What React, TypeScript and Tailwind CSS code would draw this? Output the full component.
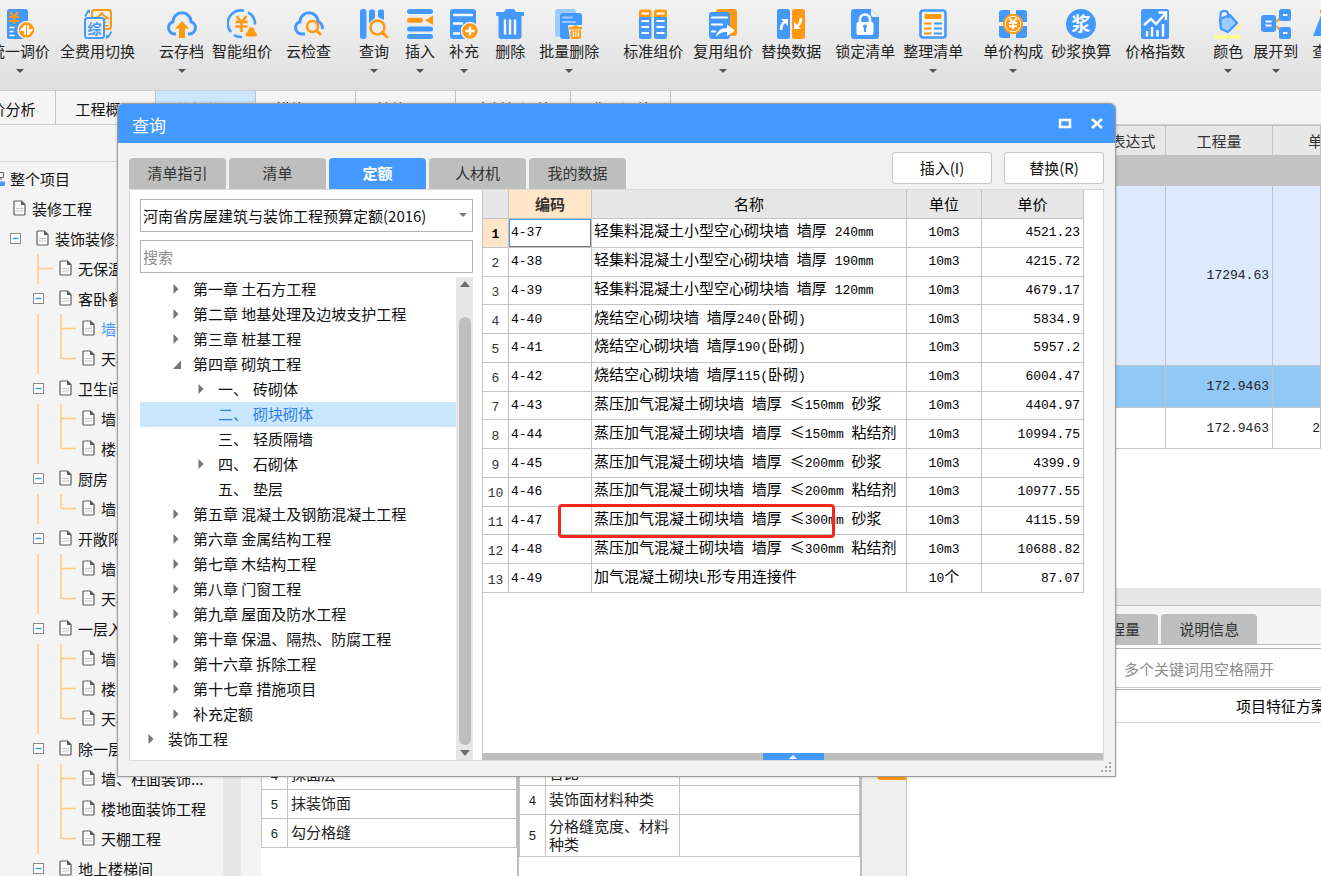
import React from "react";

const B = "#4499ff";
const O = "#ff9912";
const CJK = '"Noto Sans CJK SC", sans-serif';

/* ---------- toolbar icons, all on a 30 x 30 grid ---------- */

function Glyph({ x, y, size, fill, children }: { x: number; y: number; size: number; fill: string; children: string }) {
  return (
    <text x={x} y={y} fontSize={size} fill={fill} textAnchor="middle" fontWeight="bold" fontFamily={CJK}>
      {children}
    </text>
  );
}

const icons: Record<string, React.ReactNode> = {
  unify: (
    <>
      <rect x="2" y="0" width="21" height="30" rx="2.500" fill={B} />
      <path d="M5 3l4 5 4-5M4 8h10M4 12h10M9 8v7" stroke={O} strokeWidth="2.200" fill="none" />
      <path d="M4.500 18.500h5M4.500 22.500h4M4.500 26.500h5" stroke="#fff" strokeWidth="1.600" />
      <circle cx="21.500" cy="21" r="8.500" fill={O} stroke="#f0f0f0" strokeWidth="1.500" />
      <path d="M20 16v10M23 16v10M20 16.500l-3.500 4.500H20M23 25.500l3.500-4.500H23" stroke="#fff" strokeWidth="1.800" fill="#fff" />
    </>
  ),
  swap: (
    <>
      <rect x="9" y="1" width="19" height="19" rx="2.500" fill="none" stroke={O} strokeWidth="2" />
      <Glyph x={19} y={16} size={15} fill={O}>全</Glyph>
      <rect x="2" y="9" width="19" height="20" rx="2.500" fill="#f0f0f0" stroke={B} strokeWidth="2" />
      <Glyph x={11.5} y={24.5} size={14} fill={B}>综</Glyph>
      <path d="M2 7.500l3.500-6M28.500 22.500l-3.500 6" fill="none" stroke={B} strokeWidth="1.800" />
      <path d="M7 0v4.500L3.500 2.500zM23 30v-4.500l3.500 2z" fill={B} />
    </>
  ),
  cloudUp: (
    <>
      <path d="M9 25H7.500A6.300 6.300 0 0 1 6 12.700 9 9 0 0 1 24 12.700 6.300 6.300 0 0 1 22.500 25H21" fill="none" stroke={B} strokeWidth="3" />
      <path d="M15 12l7 7.500h-4V29h-6v-9.500H8z" fill={O} />
    </>
  ),
  smart: (
    <>
      <path d="M17 1.800A13 13 0 0 0 4 23M7 26a13 13 0 0 0 8 2M21 3.500a13 13 0 0 1 7 12" fill="none" stroke={B} strokeWidth="2.600" />
      <path d="M9.500 7l5 6 5-6M8.500 13h12M8.500 17.500h12M14.500 13v10" fill="none" stroke={O} strokeWidth="2.600" />
      <path d="M24.500 18c3 0 2.500 4 5 6.500 1 1.800 0 3-1.500 3h-7.500c-1.500 0-2.500-1.200-1.500-3 3-2.500 2.500-6.500 5.500-6.500z" fill={O} />
    </>
  ),
  cloudFind: (
    <>
      <path d="M11 25H7.500A6.300 6.300 0 0 1 6 12.700 9 9 0 0 1 24 12.700 6.500 6.500 0 0 1 28.300 20" fill="none" stroke={B} strokeWidth="3" />
      <circle cx="18.500" cy="17.500" r="5.500" fill="none" stroke={O} strokeWidth="2.600" />
      <path d="M22.500 21.500l4.500 4.500" stroke={O} strokeWidth="3" />
    </>
  ),
  query: (
    <>
      <rect x="1" y="0" width="6.500" height="30" rx="2.500" fill={B} />
      <path d="M10 2.500a2 2 0 0 1 2-2h2a2 2 0 0 1 2 2V9l-6 5zM19 2.500a2 2 0 0 1 2-2h2a2 2 0 0 1 2 2V11l-6-3z" fill={B} />
      <circle cx="18.500" cy="18.500" r="7" fill="none" stroke={O} strokeWidth="2.500" />
      <path d="M23.500 23.500l4.500 4.500" stroke={O} strokeWidth="3" strokeLinecap="round" />
    </>
  ),
  insert: (
    <>
      <path d="M4.500 2.500h21M4.500 20h21M4.500 27.500h21" stroke={B} strokeWidth="5" strokeLinecap="round" />
      <path d="M4.500 11.200h11" stroke={O} strokeWidth="5" strokeLinecap="round" />
      <path d="M28 6.500v9.500l-8-4.800z" fill={O} />
    </>
  ),
  supply: (
    <>
      <rect x="1" y="0" width="26" height="30" rx="3" fill={B} />
      <path d="M5 6h18M5 14.500h8M5 24.500h5" stroke="#fff" strokeWidth="2.400" strokeLinecap="round" />
      <circle cx="21" cy="22" r="8.500" fill={O} stroke="#f0f0f0" strokeWidth="1.600" />
      <path d="M21 17.500v9M16.500 22h9" stroke="#fff" strokeWidth="2.400" />
    </>
  ),
  trash: (
    <>
      <path d="M2 3h7l2-3h8l2 3h7a1 1 0 0 1 1 1v2a1 1 0 0 1-1 1h-1.500v20a3 3 0 0 1-3 3H6.500a3 3 0 0 1-3-3V7H2a1 1 0 0 1-1-1V4a1 1 0 0 1 1-1z" fill={B} />
      <path d="M10 10.500v15M15 10.500v15M20 10.500v15" stroke="#fff" strokeWidth="2.400" />
    </>
  ),
  batchTrash: (
    <>
      <rect x="1" y="0" width="21" height="28" rx="3" fill="#9cccff" />
      <rect x="6" y="4" width="22" height="26" rx="3" fill={B} />
      <path d="M9 8.500h9M9 13h12" stroke="#9cccff" strokeWidth="2" strokeLinecap="round" />
      <path d="M14 16h14v14H16z" fill="#f0f0f0" />
      <path d="M15 18h4l1-1.800h3l1 1.800h4v2.500H15zM16.500 21.500h10.500V28a2 2 0 0 1-2 2h-6.500a2 2 0 0 1-2-2z" fill={O} />
      <path d="M19.300 22.500v5.500M21.800 22.500v5.500M24.300 22.500v5.500" stroke="#fff" strokeWidth="1.200" />
    </>
  ),
  standard: (
    <>
      <path d="M1 3a2.500 2.500 0 0 1 2.500-2.500h8A2.500 2.500 0 0 1 13.500 3v5H1zM16 3a2.500 2.500 0 0 1 2.500-2.500h8A2.500 2.500 0 0 1 29 3v5H16z" fill={O} />
      <path d="M1 8h12.500v19.500A2.500 2.500 0 0 1 11 30H3.500A2.500 2.500 0 0 1 1 27.500zM16 8h13v19.500a2.500 2.500 0 0 1-2.500 2.500h-8a2.500 2.500 0 0 1-2.500-2.500z" fill={B} />
      <path d="M3.500 4.500H11M18.500 4.500h8M3.500 12H11M18.500 12h8M3.500 18H11M18.500 18h8M3.500 24H11M18.500 24h8" stroke="#fff" strokeWidth="2" />
    </>
  ),
  reuse: (
    <>
      <rect x="8" y="0" width="21" height="27" rx="3" fill={O} />
      <rect x="1" y="3" width="21" height="27" rx="3" fill={B} />
      <path d="M4 8.500h15M4 15.500h10M4 22.500h3" stroke="#fff" strokeWidth="2.200" strokeLinecap="round" />
      <path d="M8 28c1-6 5-9 11-9v-3.500l8 6-8 5.500v-4c-4-.5-8 1-11 5z" fill="#fff" />
    </>
  ),
  replace: (
    <>
      <rect x="1" y="0" width="13" height="30" rx="2.500" fill={B} />
      <rect x="16" y="0" width="13" height="30" rx="2.500" fill={O} />
      <path d="M5 21c0-4 1-6 3.500-8M25 9c0 4-1 6-3.500 8" fill="none" stroke="#fff" strokeWidth="2.600" />
      <path d="M5 10h7v7zM18 13v7h7z" fill="#fff" />
    </>
  ),
  lock: (
    <>
      <path d="M1 3a3 3 0 0 1 3-3h17l8 8v19a3 3 0 0 1-3 3H4a3 3 0 0 1-3-3z" fill={B} />
      <path d="M21 0l8 8h-6a2 2 0 0 1-2-2z" fill="#e9f4ff" />
      <rect x="6.500" y="13" width="17" height="13" rx="2" fill="#fff" />
      <path d="M10 14v-3.500a5 5 0 0 1 10 0V14" fill="none" stroke="#fff" strokeWidth="2.600" />
      <circle cx="15" cy="17.500" r="2" fill={B} />
      <path d="M15 18v5" stroke={B} strokeWidth="2" />
    </>
  ),
  tidy: (
    <>
      <rect x="2.500" y="1.500" width="25" height="27" rx="2.500" fill="#f4f4f4" stroke={B} strokeWidth="2.600" />
      <rect x="6.500" y="5" width="17" height="5" rx="1.500" fill={O} />
      <path d="M6 14.500h7.500M6 19.500h7.500M6 24.500h7.500" stroke={O} strokeWidth="2.200" />
      <path d="M16 14.500h8M16 19.500h8M16 24.500h8" stroke={B} strokeWidth="2.200" />
    </>
  ),
  compose: (
    <>
      <path d="M4 1h8v8l-4 4H1V4a3 3 0 0 1 3-3zM26 1h-8v8l4 4h7V4a3 3 0 0 0-3-3zM4 29h8v-8l-4-4H1v9a3 3 0 0 0 3 3zM26 29h-8v-8l4-4h7v9a3 3 0 0 1-3 3z" fill={B} />
      <circle cx="15" cy="15" r="9.200" fill="#fff" stroke={O} strokeWidth="2" />
      <circle cx="15" cy="15" r="7.300" fill={O} />
      <path d="M11.500 9.500l3.500 4 3.500-4M11 14h8M11 17.300h8M15 14v6.500" fill="none" stroke="#fff" strokeWidth="2" />
    </>
  ),
  mortar: (
    <>
      <circle cx="15" cy="15" r="15" fill={B} />
      <Glyph x={15} y={22} size={19} fill="#fff">浆</Glyph>
    </>
  ),
  index: (
    <>
      <rect x="1" y="0" width="28" height="30" rx="2.500" fill={B} />
      <path d="M4 16l7-6 5 5 9-10M18.500 3.500h7.500v7.500" fill="none" stroke="#fff" strokeWidth="2.400" />
      <path d="M7 22v5.500M12 18v9.500M17.500 21v6.500M23 15v12.500" stroke="#fff" strokeWidth="2.400" />
    </>
  ),
  color: (
    <>
      <path d="M7 10l10-4 7 8-9 9-7-3z" fill="#9cccff" stroke={B} strokeWidth="2.400" strokeLinejoin="round" />
      <path d="M7.500 12V4.500C8.500 1 14 1 15 4.500L16 9" fill="none" stroke={B} strokeWidth="2.200" />
      <path d="M26 14c1.500 3 2 4 .8 6h-2.600C23 18.500 24.500 16 26 14z" fill="#fff36b" />
      <rect x="1" y="26.500" width="27" height="3" fill="#ffff80" />
    </>
  ),
  expand: (
    <>
      <path d="M15 13l5-5M15 17l5 5" stroke={O} strokeWidth="2" />
      <rect x="0" y="6" width="15" height="17" rx="3" fill={B} />
      <rect x="18" y="0" width="12" height="12" rx="2.500" fill={B} />
      <rect x="18" y="18" width="12" height="12" rx="2.500" fill={B} />
      <path d="M4.500 12.500h6M4.500 16.500h6M22 6h4.500M22 24h4.500" stroke="#fff" strokeWidth="2" />
    </>
  ),
  find: (
    <>
      <path d="M10 4h10l6 23H1z" fill={B} />
      <path d="M8 2.500h12" stroke={O} strokeWidth="3" />
    </>
  ),
};

const tools: { icon: string; label: string; gap: string; menu?: boolean }[] = [
  { icon: "unify", label: "统一调价", gap: "", menu: true },
  { icon: "swap", label: "全费用切换", gap: "ml-2.5" },
  { icon: "cloudUp", label: "云存档", gap: "ml-6", menu: true },
  { icon: "smart", label: "智能组价", gap: "ml-2" },
  { icon: "cloudFind", label: "云检查", gap: "ml-3.5" },
  { icon: "query", label: "查询", gap: "ml-7", menu: true },
  { icon: "insert", label: "插入", gap: "ml-4", menu: true },
  { icon: "supply", label: "补充", gap: "ml-3.5", menu: true },
  { icon: "trash", label: "删除", gap: "ml-4" },
  { icon: "batchTrash", label: "批量删除", gap: "ml-3.5", menu: true },
  { icon: "standard", label: "标准组价", gap: "ml-6" },
  { icon: "reuse", label: "复用组价", gap: "ml-2.5", menu: true },
  { icon: "replace", label: "替换数据", gap: "ml-2" },
  { icon: "lock", label: "锁定清单", gap: "ml-3.5" },
  { icon: "tidy", label: "整理清单", gap: "ml-2", menu: true },
  { icon: "compose", label: "单价构成", gap: "ml-5", menu: true },
  { icon: "mortar", label: "砂浆换算", gap: "ml-2" },
  { icon: "index", label: "价格指数", gap: "ml-3.5" },
  { icon: "color", label: "颜色", gap: "ml-7", menu: true },
  { icon: "expand", label: "展开到", gap: "ml-2.5", menu: true },
  { icon: "find", label: "查找", gap: "ml-3.5" },
];

function Toolbar() {
  return (
    <header className="flex h-[91px] shrink-0 overflow-hidden border-b border-[#cdcdcd] bg-linear-to-b from-[#f3f3f3] to-[#dedede] pt-[9px]">
      <div className="-ml-2.5 flex items-start">
        {tools.map((t) => (
          <button key={t.label} type="button" className={`flex shrink-0 flex-col items-center whitespace-nowrap text-[#222] ${t.gap}`}>
            <svg viewBox="0 0 30 30" className="size-[30px]" aria-hidden="true">{icons[t.icon]}</svg>
            <span className="mt-0.5 h-5 leading-5">{t.label}</span>
            {t.menu && (
              <svg viewBox="0 0 8 4" className="mt-2 h-1 w-2" aria-hidden="true"><path d="M0 0h8L4 4z" fill="#555" /></svg>
            )}
          </button>
        ))}
      </div>
    </header>
  );
}

const pageTabs = [
  { label: "造价分析", w: "w-[100px]" },
  { label: "工程概况", w: "w-[100px]" },
  { label: "分部分项", w: "w-[100px]", active: true },
  { label: "措施项目", w: "w-[100px]" },
  { label: "其他项目", w: "w-[100px]" },
  { label: "人材机汇总", w: "w-[115px]" },
  { label: "费用汇总", w: "w-[100px]" },
];

function PageTabs() {
  return (
    <nav className="flex h-[34px] shrink-0 overflow-hidden border-b border-[#d0d0d0] bg-[#f4f4f4]">
      <div className="-ml-11 flex">
        {pageTabs.map((t) => (
          <button
            key={t.label}
            type="button"
            className={`${t.w} shrink-0 border-r border-[#c3c3c3] pt-0.5 ${t.active ? "bg-[#cbe7ff] text-[#4499ff]" : ""}`}
          >
            {t.label}
          </button>
        ))}
      </div>
    </nav>
  );
}

/* ---------- project tree ---------- */

type Guide = "none" | "box" | "line" | "tee" | "end";

const projectTree: { label: string; guides: Guide[]; active?: boolean }[] = [
  { label: "装修工程", guides: [] },
  { label: "装饰装修工程", guides: ["box"] },
  { label: "无保温墙面工程", guides: ["none", "tee"] },
  { label: "客卧餐厅", guides: ["none", "box"] },
  { label: "墙、柱面装饰...", guides: ["none", "line", "tee"], active: true },
  { label: "天棚工程", guides: ["none", "line", "end"] },
  { label: "卫生间", guides: ["none", "box"] },
  { label: "墙、柱面装饰...", guides: ["none", "line", "tee"] },
  { label: "楼地面装饰工程", guides: ["none", "line", "end"] },
  { label: "厨房", guides: ["none", "box"] },
  { label: "墙、柱面装饰...", guides: ["none", "line", "end"] },
  { label: "开敞阳台", guides: ["none", "box"] },
  { label: "墙、柱面装饰...", guides: ["none", "line", "tee"] },
  { label: "天棚工程", guides: ["none", "line", "end"] },
  { label: "一层入户大堂", guides: ["none", "box"] },
  { label: "墙、柱面装饰...", guides: ["none", "line", "tee"] },
  { label: "楼地面装饰工程", guides: ["none", "line", "tee"] },
  { label: "天棚工程", guides: ["none", "line", "end"] },
  { label: "除一层外公共区", guides: ["none", "box"] },
  { label: "墙、柱面装饰...", guides: ["none", "line", "tee"] },
  { label: "楼地面装饰工程", guides: ["none", "line", "tee"] },
  { label: "天棚工程", guides: ["none", "line", "end"] },
  { label: "地上楼梯间", guides: ["none", "box"] },
];

function GuideCell({ kind }: { kind: Guide }) {
  return (
    <svg viewBox="0 0 23 30" className="h-[30px] w-[23px] shrink-0 overflow-visible" aria-hidden="true">
      {kind === "box" && (
        <>
          <rect x="6.500" y="9.500" width="10" height="10" fill="#fff" stroke="#8a8a8a" />
          <path d="M8.500 14.500h6" stroke="#2aa0e0" strokeWidth="1.400" />
        </>
      )}
      {(kind === "line" || kind === "tee") && <path d="M11 0v30" stroke="#ffcb85" strokeWidth="1.500" />}
      {kind === "end" && <path d="M11 0v14.500" stroke="#ffcb85" strokeWidth="1.500" />}
      {(kind === "tee" || kind === "end") && <path d="M11 14.500h15" stroke="#ffcb85" strokeWidth="1.500" />}
    </svg>
  );
}

function DocIcon() {
  return (
    <svg viewBox="0 0 13 16" className="mb-0.5 ml-[9px] h-4 w-[13px] shrink-0" aria-hidden="true">
      <path d="M1 2a1 1 0 0 1 1-1h6.500L12 4.500V14a1 1 0 0 1-1 1H2a1 1 0 0 1-1-1z" fill="#fafafa" stroke="#5c5c5c" strokeWidth="1.200" />
      <path d="M8 .8L12.400 5H8z" fill="#5c5c5c" />
      <path d="M3 8.500h7M3 11h7" stroke="#c8c8c8" />
    </svg>
  );
}

function ProjectTree() {
  return (
    <aside className="flex w-[261px] shrink-0 flex-col overflow-hidden bg-[#f4f4f4]">
      <div className="h-[37px] shrink-0 border-b border-[#d8d8d8]" />
      <div className="flex min-h-0 flex-1">
        <ul className="min-w-0 flex-1 overflow-hidden whitespace-nowrap pt-0.5">
          <li className="flex h-[30px] items-center">
            <svg viewBox="0 0 5 16" className="h-4 w-[5px]" aria-hidden="true">
              <path d="M0 1.500h3.500v5H0M1 6.500V9" fill="none" stroke="#666" />
              <path d="M0 10.500h5V15H0z" fill={B} />
            </svg>
            <span className="ml-[5px]">整个项目</span>
          </li>
          {projectTree.map((n, i) => (
            <li key={i} className="flex h-[30px] items-center pl-1">
              {n.guides.map((g, j) => (
                <GuideCell key={j} kind={g} />
              ))}
              <DocIcon />
              <span className={`ml-1.5 ${n.active ? "text-[#4499ff]" : ""}`}>{n.label}</span>
            </li>
          ))}
        </ul>
        <div className="mr-5 w-[18px] shrink-0 bg-[#e6e6e6]" />
      </div>
    </aside>
  );
}

/* ---------- grid text: half-width characters in a fixed-pitch face ---------- */

function GridText({ children }: { children: string }) {
  return (
    <>
      {children.split(/([\x20-\x7e]+)/).map((part, i) =>
        /^[\x20-\x7e]+$/.test(part) ? (
          <span key={i} className="font-['Liberation_Mono',monospace] text-[13px] whitespace-pre">{part}</span>
        ) : (
          part
        ),
      )}
    </>
  );
}

const cell = "border-r border-b border-[#c3c3c3] p-0";

function MainGrid() {
  const cols = ["", "编码", "名称", "工程量表达式", "工程量", "单价"];
  const rows = [
    { h: "h-[30px]", bg: "bg-[#c3c3c3]", qty: "", price: "" },
    { h: "h-[180px]", bg: "bg-[#dce9ff]", qty: "17294.63", price: "" },
    { h: "h-[42px]", bg: "bg-[#92c8f6]", qty: "172.9463", price: "" },
    { h: "h-[41px]", bg: "bg-white", qty: "172.9463", price: "2" },
  ];
  return (
    <div className="min-h-0 flex-1 overflow-hidden bg-white">
      <table className="w-full table-fixed border-separate border-spacing-0">
        <colgroup>
          <col className="w-[40px]" />
          <col className="w-[160px]" />
          <col />
          <col className="w-[110px]" />
          <col className="w-[107px]" />
          <col className="w-[48px]" />
        </colgroup>
        <thead>
          <tr className="h-[31px] bg-[#e7e7e7] text-[#333]">
            {cols.map((c, i) => (
              <th key={i} className={`${cell} overflow-hidden border-t font-normal whitespace-nowrap ${i === 5 ? "pl-[35px] text-left" : ""}`}>{c}</th>
            ))}
          </tr>
        </thead>
        <tbody>
          {rows.map((r, i) => (
            <tr key={i} className={`${r.h} ${r.bg} text-[#222]`}>
              <td className={cell} />
              <td className={cell} />
              <td className={cell} />
              <td className={cell} />
              <td className={`${cell} pr-[3px] pb-0.5 text-right`}><GridText>{r.qty}</GridText></td>
              <td className={`${cell} pb-0.5 text-right`}><GridText>{r.price}</GridText></td>
            </tr>
          ))}
        </tbody>
      </table>
    </div>
  );
}

const lowerTabs = ["工料机显示", "单价构成", "标准换算", "换算信息", "特征及内容", "组价方案", "工程量明细", "反查工程量", "说明信息"];

function LowerPane() {
  const work = ["基层清理", "砂浆制作、运输", "底层抹灰", "抹面层", "抹装饰面", "勾分格缝"];
  const features = [
    { label: "墙体类型", h: "h-[29px]" },
    { label: "安装方式", h: "h-[29px]" },
    { label: "底层厚度、砂浆配合比", h: "h-[42px]" },
    { label: "装饰面材料种类", h: "h-[29px]" },
    { label: "分格缝宽度、材料种类", h: "h-[42px]" },
  ];
  return (
    <section className="flex h-[288px] shrink-0 flex-col overflow-hidden">
      <div className="h-[18px] shrink-0 border-b border-[#bdbdbd] bg-[#e6e6e6]" />
      <div className="flex h-[39px] shrink-0 items-end gap-[3px] overflow-hidden border-b border-[#bdbdbd] bg-[#f4f4f4] pl-12">
        {lowerTabs.map((t) => (
          <button key={t} type="button" className="h-[30px] shrink-0 rounded-t-sm bg-[#bebebe] px-[18px] whitespace-nowrap text-[#333]">{t}</button>
        ))}
      </div>
      <div className="flex min-h-0 flex-1 bg-white text-[#222]">
        <div className="w-[258px] shrink-0 overflow-hidden border-r-2 border-[#bdbdbd]">
          <table className="w-full table-fixed border-separate border-spacing-0 border-l border-[#c3c3c3]">
            <colgroup>
              <col className="w-[26px]" />
              <col />
            </colgroup>
            <thead>
              <tr className="h-[29px] bg-[#e7e7e7]">
                <th className={cell} />
                <th className={`${cell} font-normal`}>工作内容</th>
              </tr>
            </thead>
            <tbody>
              {work.map((w, i) => (
                <tr key={w} className="h-[29px]">
                  <td className={`${cell} text-center`}><GridText>{String(i + 1)}</GridText></td>
                  <td className={`${cell} pb-0.5 pl-[3px] leading-5`}>{w}</td>
                </tr>
              ))}
            </tbody>
          </table>
        </div>
        <div className="w-[343px] shrink-0 overflow-hidden border-r-2 border-[#bdbdbd]">
          <table className="w-full table-fixed border-separate border-spacing-0 border-l border-[#c3c3c3]">
            <colgroup>
              <col className="w-[26px]" />
              <col className="w-[134px]" />
              <col />
            </colgroup>
            <thead>
              <tr className="h-[41px] bg-[#e7e7e7]">
                <th className={cell} />
                <th className={`${cell} font-normal`}>特征</th>
                <th className={`${cell} font-normal`}>特征值</th>
              </tr>
            </thead>
            <tbody>
              {features.map((f, i) => (
                <tr key={f.label} className={f.h}>
                  <td className={`${cell} text-center`}><GridText>{String(i + 1)}</GridText></td>
                  <td className={`${cell} pr-2 pb-0.5 pl-[3px] leading-[18px]`}>{f.label}</td>
                  <td className={cell} />
                </tr>
              ))}
            </tbody>
          </table>
        </div>
        <div className="flex w-[45px] shrink-0 flex-col items-end border-r border-[#c3c3c3] bg-[#f0f0f0] pt-[107px]">
          <button type="button" aria-label="应用" className="h-7 w-[29px] rounded-l-sm bg-[#ff9912]" />
        </div>
        <div className="min-w-0 flex-1 overflow-hidden pt-[3px]">
          <div className="h-[42px] border-y border-[#b3b3b3]">
            <div className="h-[39px] border-b border-[#c9c9c9]">
              <input
                type="text"
                aria-label="关键词"
                placeholder="多个关键词用空格隔开"
                className="h-full w-full bg-transparent pl-[217px] outline-none placeholder:text-[#8c8c8c]"
              />
            </div>
          </div>
          <div className="flex h-[33px] items-center border-b border-[#dcdcdc] pl-[329px] whitespace-nowrap text-black">项目特征方案</div>
        </div>
      </div>
    </section>
  );
}

/* ---------- query dialog ---------- */

const dialogTabs = ["清单指引", "清单", "定额", "人材机", "我的数据"];

type Mark = "closed" | "open" | "leaf";
const chapters: { label: string; level: number; mark: Mark; num?: string; active?: boolean }[] = [
  { label: "第一章 土石方工程", level: 1, mark: "closed" },
  { label: "第二章 地基处理及边坡支护工程", level: 1, mark: "closed" },
  { label: "第三章 桩基工程", level: 1, mark: "closed" },
  { label: "第四章 砌筑工程", level: 1, mark: "open" },
  { num: "一、", label: "砖砌体", level: 2, mark: "closed" },
  { num: "二、", label: "砌块砌体", level: 2, mark: "leaf", active: true },
  { num: "三、", label: "轻质隔墙", level: 2, mark: "leaf" },
  { num: "四、", label: "石砌体", level: 2, mark: "closed" },
  { num: "五、", label: "垫层", level: 2, mark: "leaf" },
  { label: "第五章 混凝土及钢筋混凝土工程", level: 1, mark: "closed" },
  { label: "第六章 金属结构工程", level: 1, mark: "closed" },
  { label: "第七章 木结构工程", level: 1, mark: "closed" },
  { label: "第八章 门窗工程", level: 1, mark: "closed" },
  { label: "第九章 屋面及防水工程", level: 1, mark: "closed" },
  { label: "第十章 保温、隔热、防腐工程", level: 1, mark: "closed" },
  { label: "第十六章 拆除工程", level: 1, mark: "closed" },
  { label: "第十七章 措施项目", level: 1, mark: "closed" },
  { label: "补充定额", level: 1, mark: "closed" },
  { label: "装饰工程", level: 0, mark: "closed" },
];

const indent = ["pl-1.5", "pl-[31px]", "pl-14"];

function ChapterTree() {
  return (
    <div className="mt-1 flex min-h-0 flex-1">
      <ul className="min-w-0 flex-1 overflow-hidden whitespace-nowrap">
        {chapters.map((c) => (
          <li key={c.label} className={`flex h-[25px] items-center pb-px ${indent[c.level]} ${c.active ? "bg-[#cbe7ff] text-[#2b7fe8]" : ""}`}>
            <svg viewBox="0 0 10 10" className="mr-3 size-[10px] shrink-0" aria-hidden="true">
              {c.mark === "closed" && <path d="M2.500 0l5 5-5 5z" fill="#757575" />}
              {c.mark === "open" && <path d="M10 1.500V10H2z" fill="#757575" />}
            </svg>
            {c.num && <span className="w-[35px]">{c.num}</span>}
            <span>{c.label}</span>
          </li>
        ))}
      </ul>
      <div className="flex w-[17px] shrink-0 flex-col items-center bg-[#e7e7e7] py-1">
        <svg viewBox="0 0 10 6" className="h-1.5 w-2.5" aria-hidden="true"><path d="M5 0l5 6H0z" fill="#6b6b75" /></svg>
        <div className="mt-[30px] mb-[5px] w-[12px] flex-1 rounded-full bg-[#bebebe]" />
        <svg viewBox="0 0 10 6" className="h-1.5 w-2.5" aria-hidden="true"><path d="M0 0h10L5 6z" fill="#6b6b75" /></svg>
      </div>
    </div>
  );
}

const quota: [string, string, string, string][] = [
  ["4-37", "轻集料混凝土小型空心砌块墙 墙厚 240mm", "10m3", "4521.23"],
  ["4-38", "轻集料混凝土小型空心砌块墙 墙厚 190mm", "10m3", "4215.72"],
  ["4-39", "轻集料混凝土小型空心砌块墙 墙厚 120mm", "10m3", "4679.17"],
  ["4-40", "烧结空心砌块墙 墙厚240(卧砌)", "10m3", "5834.9"],
  ["4-41", "烧结空心砌块墙 墙厚190(卧砌)", "10m3", "5957.2"],
  ["4-42", "烧结空心砌块墙 墙厚115(卧砌)", "10m3", "6004.47"],
  ["4-43", "蒸压加气混凝土砌块墙 墙厚 ≤150mm 砂浆", "10m3", "4404.97"],
  ["4-44", "蒸压加气混凝土砌块墙 墙厚 ≤150mm 粘结剂", "10m3", "10994.75"],
  ["4-45", "蒸压加气混凝土砌块墙 墙厚 ≤200mm 砂浆", "10m3", "4399.9"],
  ["4-46", "蒸压加气混凝土砌块墙 墙厚 ≤200mm 粘结剂", "10m3", "10977.55"],
  ["4-47", "蒸压加气混凝土砌块墙 墙厚 ≤300mm 砂浆", "10m3", "4115.59"],
  ["4-48", "蒸压加气混凝土砌块墙 墙厚 ≤300mm 粘结剂", "10m3", "10688.82"],
  ["4-49", "加气混凝土砌块L形专用连接件", "10个", "87.07"],
];

function QuotaTable() {
  return (
    <div className="relative">
      <table className="h-[403px] w-[601px] table-fixed border-separate border-spacing-0 whitespace-nowrap text-black">
        <colgroup>
          <col className="w-[26px]" />
          <col className="w-[83px]" />
          <col className="w-[315px]" />
          <col className="w-[75px]" />
          <col className="w-[102px]" />
        </colgroup>
        <thead>
          <tr className="h-[29px] bg-[#e7e7e7] leading-5">
            <th className={cell} />
            <th className={`${cell} bg-[#ffe6c8] font-bold text-[#333]`}>编码</th>
            <th className={`${cell} font-normal`}>名称</th>
            <th className={`${cell} font-normal`}>单位</th>
            <th className={`${cell} font-normal`}>单价</th>
          </tr>
        </thead>
        <tbody>
          {quota.map(([code, name, unit, price], i) => (
            <tr key={code} className="leading-5">
              <td className={`${cell} pt-0.5 text-center ${i === 0 ? "bg-[#ffe6c8] font-bold" : "text-[#333]"}`}><GridText>{String(i + 1)}</GridText></td>
              <td className={`${cell} pb-0.5 pl-0.5 ${i === 0 ? "shadow-[inset_1px_1px_0_#4499ff,inset_-1px_-1px_0_#7a7a7a]" : ""}`}><GridText>{code}</GridText></td>
              <td className={`${cell} pb-0.5 pl-0.5`}><GridText>{name}</GridText></td>
              <td className={`${cell} pb-0.5 text-center`}><GridText>{unit}</GridText></td>
              <td className={`${cell} pr-[3px] pb-0.5 text-right`}><GridText>{price}</GridText></td>
            </tr>
          ))}
        </tbody>
      </table>
      <div className="pointer-events-none absolute top-[314px] left-[75px] h-[34px] w-[277px] rounded-[4px] border-3 border-[#f5261c]" />
    </div>
  );
}

function QueryDialog() {
  return (
    <div role="dialog" aria-label="查询" className="absolute top-[103px] left-[117px] flex h-[674px] w-[999px] flex-col rounded-t-md border border-[#9c9c9c] bg-[#f1f1f1] shadow-[0_0_3px_rgba(0,0,0,0.25)]">
      <div className="flex h-[39px] shrink-0 items-center rounded-t-[5px] bg-[#4499ff] pr-[11px] pl-[14px] text-white">
        <h1 className="flex-1 pt-0.5 text-[17px] leading-6">查询</h1>
        <button type="button" aria-label="最大化" className="mr-[18px]">
          <svg viewBox="0 0 14 12" className="h-3 w-3.5" aria-hidden="true"><rect x="2" y="2" width="10" height="7" fill="none" stroke="#fff" strokeWidth="2.500" /></svg>
        </button>
        <button type="button" aria-label="关闭">
          <svg viewBox="0 0 14 12" className="h-3 w-3.5" aria-hidden="true"><path d="M2 1l10 9M12 1L2 10" stroke="#fff" strokeWidth="2.600" /></svg>
        </button>
      </div>
      <div className="flex h-[46px] shrink-0 items-end justify-between px-[11px]">
        <div className="flex gap-[3px]">
          {dialogTabs.map((t) => (
            <button
              key={t}
              type="button"
              className={`h-[31px] w-[97px] rounded-t-sm pb-0.5 ${t === "定额" ? "bg-[#4499ff] font-bold text-white" : "bg-[#bebebe] text-[#333]"}`}
            >
              {t}
            </button>
          ))}
        </div>
        <div className="flex gap-3 pb-[5px]">
          <button type="button" className="h-8 w-[100px] rounded-[3px] border border-[#c6c6c6] bg-white pb-px">插入(I)</button>
          <button type="button" className="h-8 w-[100px] rounded-[3px] border border-[#c6c6c6] bg-white pb-px">替换(R)</button>
        </div>
      </div>
      <div className="mx-[11px] mb-[15px] flex min-h-0 flex-1 border border-[#d9d9d9] bg-white">
        <div className="flex w-[352px] shrink-0 flex-col pt-[9px] pr-[9px] pl-[10px]">
          <div className="relative">
            <select aria-label="定额库" className="h-[33px] w-full appearance-none rounded-none border border-[#b5b5b5] bg-white pl-0.5 outline-none">
              <option>河南省房屋建筑与装饰工程预算定额(2016)</option>
            </select>
            <svg viewBox="0 0 8 4" className="pointer-events-none absolute top-[14px] right-[6px] h-1 w-2" aria-hidden="true"><path d="M0 0h8L4 4z" fill="#777" /></svg>
          </div>
          <input type="search" aria-label="搜索" placeholder="搜索" className="mt-2 h-[33px] w-full border border-[#b5b5b5] pl-0.5 outline-none placeholder:text-[#8c8c8c]" />
          <ChapterTree />
        </div>
        <div className="flex min-w-0 flex-1 flex-col border-l border-[#c3c3c3]">
          <div className="min-h-0 flex-1"><QuotaTable /></div>
          <div className="flex h-[7px] shrink-0 justify-center bg-[#bebebe]">
            <button type="button" aria-label="展开" className="flex h-full w-[61px] items-center justify-center bg-[#4499ff]">
              <svg viewBox="0 0 8 4" className="h-1 w-2" aria-hidden="true"><path d="M4 0l4 4H0z" fill="#fff" /></svg>
            </button>
          </div>
        </div>
      </div>
      <svg viewBox="0 0 10 10" className="absolute right-1 bottom-1 size-[10px]" aria-hidden="true">
        <path d="M8 0h2v2H8zM4 4h2v2H4zM8 4h2v2H8zM0 8h2v2H0zM4 8h2v2H4zM8 8h2v2H8z" fill="#a8a8a8" />
      </svg>
    </div>
  );
}

export default function App() {
  return (
    <div className="relative flex h-screen flex-col overflow-hidden bg-white font-['Noto_Sans_CJK_SC',sans-serif] text-[15px] leading-[22px] text-[#111]">
      <Toolbar />
      <PageTabs />
      <div className="flex min-h-0 flex-1">
        <ProjectTree />
        <main className="flex min-w-0 flex-1 flex-col">
          <MainGrid />
          <LowerPane />
        </main>
      </div>
      <QueryDialog />
    </div>
  );
}
